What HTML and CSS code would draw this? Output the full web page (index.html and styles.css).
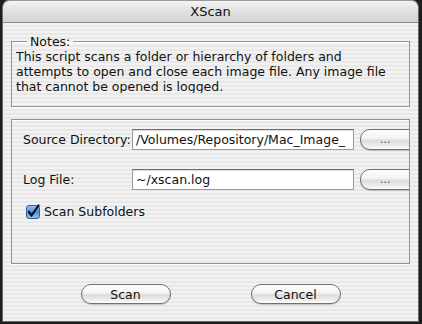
FILE: index.html
```html
<!DOCTYPE html>
<html lang="en">
<head>
    <meta charset="UTF-8">
    <title>XScan</title>
    <link rel="stylesheet" href="styles.css">
</head>
<body>
    <div class="window">
        <div class="title-bar">XScan</div>
        <div class="window-body">
            <fieldset class="group notes">
                <legend>Notes:</legend>
                <div class="notes-text">This script scans a folder or hierarchy of folders and<br>attempts to open and close each image file. Any image file<br>that cannot be opened is logged.</div>
            </fieldset>

            <div class="group options">
                <div class="field-row">
                    <label class="field-label">Source Directory:</label>
                    <div class="text-input">/Volumes/Repository/Mac_Image_</div>
                    <button class="aqua-btn browse-btn">...</button>
                </div>
                <div class="field-row">
                    <label class="field-label">Log File:</label>
                    <div class="text-input">~/xscan.log</div>
                    <button class="aqua-btn browse-btn">...</button>
                </div>
                <div class="check-row">
                    <svg class="checkbox" width="15" height="15" viewBox="0 0 15 15">
                        <defs>
                            <linearGradient id="chk" x1="0" y1="0" x2="0" y2="1">
                                <stop offset="0" stop-color="#9cc6f2"/>
                                <stop offset="0.5" stop-color="#4a8fe0"/>
                                <stop offset="1" stop-color="#8ec6f6"/>
                            </linearGradient>
                        </defs>
                        <rect x="0.5" y="1.5" width="13" height="13" rx="2.5" fill="url(#chk)" stroke="#3a5f8e"/>
                        <path d="M3 8 L5.6 11.5 L12.5 1.5" fill="none" stroke="#111" stroke-width="2.2" stroke-linecap="round" stroke-linejoin="round"/>
                    </svg>
                    <span>Scan Subfolders</span>
                </div>
            </div>

            <div class="dialog-buttons">
                <button class="aqua-btn main-btn">Scan</button>
                <button class="aqua-btn main-btn">Cancel</button>
            </div>
        </div>
    </div>
</body>
</html>
```

FILE: styles.css
```css
:root {
    --stripe-light: #f2f2f2;
    --stripe-dark: #e8e8e8;
    --group-border: #939393;
    --text: #111;
}

body {
    margin: 0;
    background: #1e1e1e;
    font-family: 'DejaVu Sans', 'Lucida Grande', sans-serif;
    font-size: 12.5px;
    color: var(--text);
}

.window {
    margin-left: 2px;
    width: 417px;
    height: 322px;
    box-sizing: border-box;
    border: 1px solid #6a6a6a;
    border-top-color: #9a9a9a;
    border-radius: 7px 7px 0 0;
    overflow: hidden;
    display: flex;
    flex-direction: column;
}

.title-bar {
    height: 21px;
    line-height: 21px;
    text-align: center;
    font-size: 13px;
    background: linear-gradient(#f4f4f4, #e2e2e2 45%, #d2d2d2);
    border-bottom: 1px solid #8a8a8a;
    flex-shrink: 0;
}

.window-body {
    flex: 1;
    padding: 0 8px;
    background: repeating-linear-gradient(var(--stripe-light) 0 2px, var(--stripe-dark) 2px 4px);
}

/* Cajas de grupo */
.group {
    border: 1px solid var(--group-border);
    box-shadow: 0 1px 0 #fff, inset 0 1px 0 #fff;
}

.notes {
    margin: 11px 0 0 0;
    padding: 0 4px 13px 4px;
    min-width: 0;
}

.notes legend {
    margin-left: 11px;
    padding: 0 3px;
    line-height: 15px;
}

.notes-text {
    height: 44px;
    line-height: 15px;
    white-space: nowrap;
    overflow: hidden;
}

.options {
    margin-top: 12px;
    padding: 9px 0 0 11px;
    overflow: hidden;
    height: 134px;
}

.field-row {
    display: flex;
    align-items: center;
    gap: 6px;
    margin-bottom: 19px;
    white-space: nowrap;
}

.field-label {
    width: 103px;
    flex-shrink: 0;
}

.text-input {
    width: 214px;
    height: 19px;
    line-height: 19px;
    flex-shrink: 0;
    padding: 0 3px;
    background: #fff;
    border: 1px solid #9a9a9a;
    border-top-color: #6f6f6f;
    box-shadow: inset 0 1px 1px rgba(0, 0, 0, 0.15);
    overflow: hidden;
}

.aqua-btn {
    font-family: inherit;
    font-size: 12.5px;
    color: var(--text);
    height: 20px;
    border: 1px solid #707070;
    border-radius: 10px;
    background: linear-gradient(#ffffff, #f3f3f3 45%, #dcdcdc 55%, #eeeeee 85%, #ffffff);
    box-shadow: 0 1px 1px rgba(0, 0, 0, 0.2);
    padding: 0;
    flex-shrink: 0;
}

.browse-btn {
    width: 64px;
    height: 21px;
    text-align: left;
    padding-left: 19px;
    font-size: 11px;
    color: #444;
}

.check-row {
    display: flex;
    align-items: center;
    gap: 3px;
    margin-top: -5px;
    padding-left: 3px;
}

.checkbox {
    display: block;
}

.dialog-buttons {
    display: flex;
    justify-content: center;
    gap: 80px;
    margin-top: 20px;
}

.main-btn {
    width: 90px;
}
```
